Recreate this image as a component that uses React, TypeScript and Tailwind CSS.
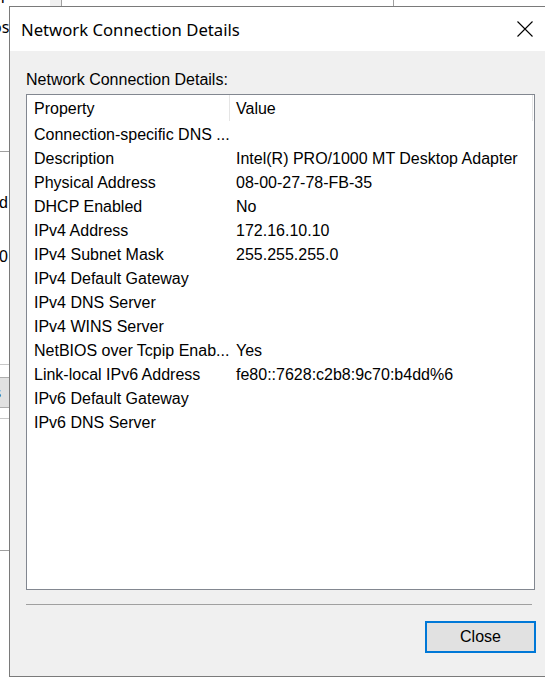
import React from "react";

const rows: [string, string][] = [
  ["Connection-specific DNS ...", ""],
  ["Description", "Intel(R) PRO/1000 MT Desktop Adapter"],
  ["Physical Address", "08-00-27-78-FB-35"],
  ["DHCP Enabled", "No"],
  ["IPv4 Address", "172.16.10.10"],
  ["IPv4 Subnet Mask", "255.255.255.0"],
  ["IPv4 Default Gateway", ""],
  ["IPv4 DNS Server", ""],
  ["IPv4 WINS Server", ""],
  ["NetBIOS over Tcpip Enab...", "Yes"],
  ["Link-local IPv6 Address", "fe80::7628:c2b8:9c70:b4dd%6"],
  ["IPv6 Default Gateway", ""],
  ["IPv6 DNS Server", ""],
];

function BackgroundWindow() {
  return (
    <div className="absolute inset-0 font-['Liberation_Sans',Arial,sans-serif] text-[16px] text-black">
      <span className="absolute left-[1px] top-[-13px] leading-[16px]">p</span>
      <div className="absolute left-[50px] top-0 h-[6px] w-[12px] border-r border-[#a0a0a0] bg-[#f0f0f0]" />
      <div className="absolute left-[393px] top-0 h-[6px] w-px bg-[#a0a0a0]" />
      <span className="absolute left-[-8px] top-[17px] font-['Noto_Sans',sans-serif] text-[16px] leading-[20px]">os</span>
      <div className="absolute left-0 top-[151px] h-px w-[9px] bg-[#a0a0a0]" />
      <span className="absolute left-[-1px] top-[194px] leading-[18px]">d</span>
      <span className="absolute left-[-1px] top-[248px] leading-[18px]">0</span>
      <div className="absolute left-0 top-[364px] h-px w-[9px] bg-[#c8c8c8]" />
      <div className="absolute left-0 top-[377px] flex h-[31px] w-[9px] items-center overflow-hidden border-y border-[#adadad] bg-[#e1e1e1]">
        <span className="ml-[-7px] leading-[18px]">s</span>
      </div>
      <div className="absolute left-0 top-[418px] h-px w-[9px] bg-[#c8c8c8]" />
      <div className="absolute left-0 top-[550px] h-px w-[9px] bg-[#a0a0a0]" />
    </div>
  );
}

export default function App() {
  return (
    <div className="relative h-[683px] w-[545px] overflow-hidden bg-white">
      <BackgroundWindow />

      <div className="absolute left-[9px] top-[6px] flex h-[671px] w-[560px] flex-col border-y border-l border-[#7a7a7a] bg-[#f0f0f0]">
        <div className="flex h-[44px] shrink-0 items-center justify-between bg-white pl-[11px] pr-[36px]">
          <span className="mt-[2px] font-['Noto_Sans','Segoe_UI',sans-serif] text-[16.7px] leading-none text-black">
            Network Connection Details
          </span>
          <svg width="16" height="16" viewBox="0 0 16 16" className="mt-[-1px]">
            <path d="M0.5 0.5 L15.5 15.5 M15.5 0.5 L0.5 15.5" stroke="#000" strokeWidth="1.1" fill="none" />
          </svg>
        </div>

        <div className="flex flex-1 flex-col pl-[16px] font-['Liberation_Sans',Arial,sans-serif] text-[16px] text-black">
          <p className="mt-[19px] h-[20px] leading-[20px]">Network Connection Details:</p>

          <div className="mt-[4px] h-[496px] w-[509px] border border-[#828790] bg-white">
            <div className="flex h-[28px] items-start">
              <div className="flex h-[26px] w-[203px] items-center border-r border-[#e5e5e5] pl-[7px] pt-[2px]">Property</div>
              <div className="flex h-[26px] w-[303px] items-center border-r border-[#e5e5e5] pl-[6px] pt-[2px]">Value</div>
            </div>
            {rows.map(([name, value]) => (
              <div key={name} className="flex h-[24px] items-center leading-[24px]">
                <div className="w-[203px] shrink-0 pl-[7px] whitespace-nowrap">{name}</div>
                <div className="pl-[6px] whitespace-nowrap">{value}</div>
              </div>
            ))}
          </div>

          <div className="mt-[14px] h-px w-[506px] bg-[#a0a0a0]" />

          <div className="mt-[16px] flex w-[510px] justify-end">
            <button className="flex h-[32px] w-[111px] items-center justify-center border-2 border-[#0078d7] bg-[#e1e1e1] text-[16px] text-black">
              Close
            </button>
          </div>
        </div>
      </div>
    </div>
  );
}
